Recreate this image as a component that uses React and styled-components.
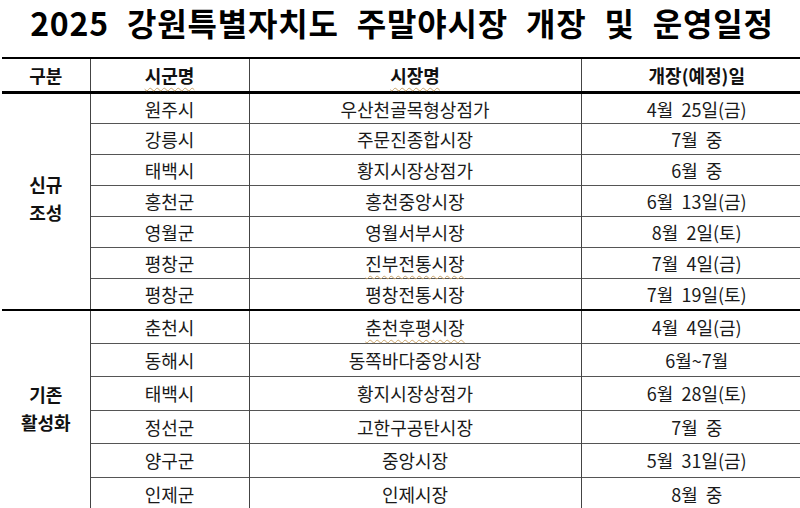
import React from 'react';
import styled, { createGlobalStyle } from 'styled-components';

const GlobalStyle = createGlobalStyle`
  html, body {
    margin: 0;
    padding: 0;
    background: #ffffff;
    overflow: hidden;
  }
  body {
    font-family: "Noto Sans CJK KR", "Noto Sans", sans-serif;
    color: #111;
  }
`;

const Page = styled.div`
  width: 800px;
  height: 508px;
  overflow: hidden;
  background: #fff;
`;

const Title = styled.h1`
  margin: 0;
  height: 57px;
  display: flex;
  align-items: center;
  justify-content: center;
  padding-left: 4px;
  padding-bottom: 14px;
  box-sizing: border-box;
  font-size: 32px;
  font-weight: 700;
  letter-spacing: 0.8px;
  word-spacing: 10px;
  color: #000;
`;

const Table = styled.table`
  margin-left: 2px;
  width: 810px;
  border-collapse: collapse;
  table-layout: fixed;
  font-size: 18px;
`;

const HeadCell = styled.th`
  height: 32px;
  padding: 0;
  font-weight: 700;
  text-align: center;
  vertical-align: middle;
  border-top: 2px solid #000;
  border-bottom: 3px solid #000;
  border-left: ${p => (p.$first ? 'none' : '1px solid #444')};
  line-height: 1;
`;

const Row = styled.tr`
  height: ${p => p.$h}px;
  border-top: ${p => (p.$split ? '2.5px solid #000' : '1px solid #555')};
`;

const GroupCell = styled.td`
  padding: 0 0 6px;
  text-align: center;
  vertical-align: middle;
  font-weight: 700;
  line-height: 28px;
  border-right: 1px solid #444;
`;

const Cell = styled.td`
  padding: 0;
  text-align: center;
  vertical-align: middle;
  border-left: ${p => (p.$first ? 'none' : '1px solid #444')};
  white-space: pre;
  line-height: 1;
  color: #1a1a1a;
`;

const Squiggle = styled.span`
  text-decoration: underline wavy #c9a46a;
  text-decoration-thickness: 1px;
  text-underline-offset: 4px;
`;

const groups = [
  {
    label: ['신규', '조성'],
    rowH: 31,
    rows: [
      ['원주시', '우산천골목형상점가', '4월  25일(금)'],
      ['강릉시', '주문진종합시장', '7월  중'],
      ['태백시', '황지시장상점가', '6월  중'],
      ['홍천군', '홍천중앙시장', '6월  13일(금)'],
      ['영월군', '영월서부시장', '8월  2일(토)'],
      ['평창군', '진부전통시장', '7월  4일(금)', true],
      ['평창군', '평창전통시장', '7월  19일(토)'],
    ],
  },
  {
    label: ['기존', '활성화'],
    rowH: 33.5,
    rows: [
      ['춘천시', '춘천후평시장', '4월  4일(금)', true],
      ['동해시', '동쪽바다중앙시장', '6월~7월'],
      ['태백시', '황지시장상점가', '6월  28일(토)'],
      ['정선군', '고한구공탄시장', '7월  중'],
      ['양구군', '중앙시장', '5월  31일(금)'],
      ['인제군', '인제시장', '8월  중'],
    ],
  },
];

const App = () => (
  <Page>
    <GlobalStyle />
    <Title>2025 강원특별자치도 주말야시장 개장 및 운영일정</Title>
    <Table>
      <colgroup>
        <col style={{ width: 88 }} />
        <col style={{ width: 159 }} />
        <col style={{ width: 332 }} />
        <col style={{ width: 231 }} />
      </colgroup>
      <thead>
        <tr>
          <HeadCell $first>구분</HeadCell>
          <HeadCell><Squiggle>시군명</Squiggle></HeadCell>
          <HeadCell><Squiggle>시장명</Squiggle></HeadCell>
          <HeadCell>개장(예정)일</HeadCell>
        </tr>
      </thead>
      {groups.map((g, gi) => (
        <tbody key={gi}>
          {g.rows.map((r, ri) => (
            <Row key={ri} $h={g.rowH} $split={gi > 0 && ri === 0}>
              {ri === 0 && (
                <GroupCell rowSpan={g.rows.length}>
                  {g.label.map(l => <div key={l}>{l}</div>)}
                </GroupCell>
              )}
              <Cell $first>{r[0]}</Cell>
              <Cell>{r[3] ? <Squiggle>{r[1]}</Squiggle> : r[1]}</Cell>
              <Cell>{r[2]}</Cell>
            </Row>
          ))}
        </tbody>
      ))}
    </Table>
  </Page>
);

export default App;
